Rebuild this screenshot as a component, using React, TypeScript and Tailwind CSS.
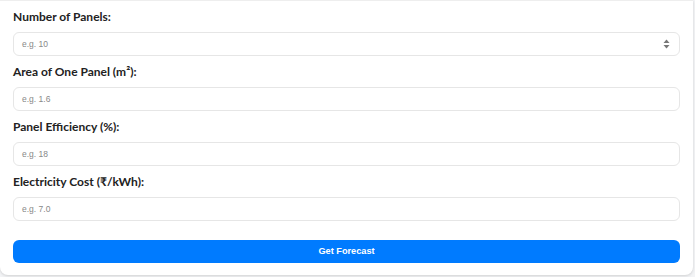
import React from "react";

const fields = [
  { label: "Number of Panels:", ph: "e.g. 10", type: "number" },
  { label: "Area of One Panel (m²):", ph: "e.g. 1.6", type: "text" },
  { label: "Panel Efficiency (%):", ph: "e.g. 18", type: "text" },
  { label: "Electricity Cost (₹/kWh):", ph: "e.g. 7.0", type: "text" },
];

export default function App() {
  return (
    <div className="w-[695px] h-[277px] bg-[#f3f4f6] overflow-hidden">
      <div className="w-[693px] h-[275px] bg-white rounded-b-[8px] shadow-[0_1px_3px_rgba(0,0,0,0.15)] border-t border-[#eeeeee] px-[13px] pt-[7px]">
        {fields.map((f, i) => (
          <div key={i} className="flex flex-col">
            <label className="h-[18px] leading-[18px] text-[12px] font-bold text-[#222] mb-[6px] font-['Lato','Open_Sans',sans-serif]">
              {f.label}
            </label>
            <div className="relative h-[24px] mb-[7px] rounded-[6px] border border-[#e6e6e6] flex items-center px-[8px]">
              <span className="text-[8.5px] text-[#888] font-['Liberation_Sans',Arial,sans-serif]">{f.ph}</span>
              {f.type === "number" && (
                <svg className="absolute right-[9px] top-1/2 -translate-y-1/2" width="7" height="10" viewBox="0 0 7 10">
                  <path d="M3.5 0.5 L6.5 4 L0.5 4 Z" fill="#777" />
                  <path d="M3.5 9.5 L6.5 6 L0.5 6 Z" fill="#777" />
                </svg>
              )}
            </div>
          </div>
        ))}
        <button className="mt-[12px] w-full h-[23px] rounded-[6px] bg-[#007bff] text-white text-[9.2px] font-bold font-['Liberation_Sans',Arial,sans-serif]">
          Get Forecast
        </button>
      </div>
    </div>
  );
}
